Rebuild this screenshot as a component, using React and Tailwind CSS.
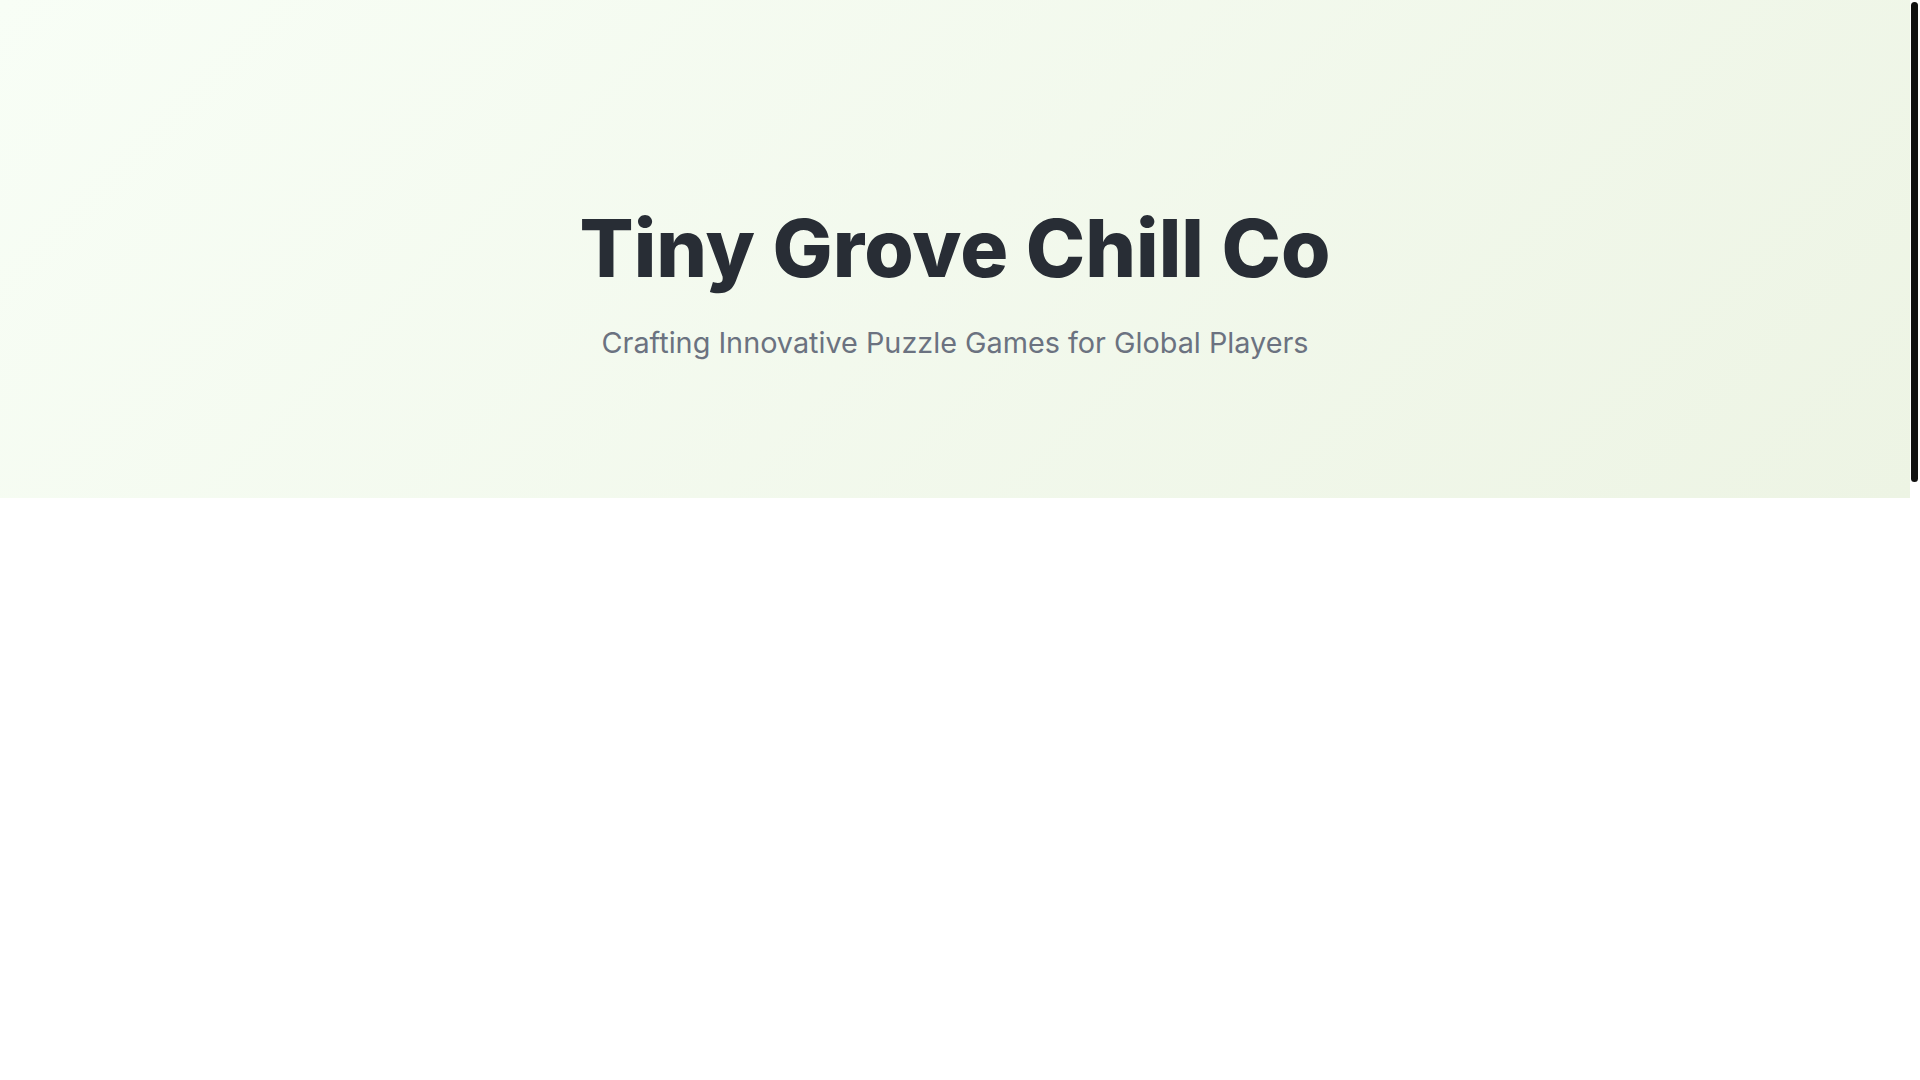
// Studio landing page: hero banner with company name and tagline.
export default function App() {
  return (
    <div className="flex h-screen overflow-hidden bg-white [font-family:Inter,'Noto_Sans',sans-serif]">
      <div className="flex-1 overflow-y-auto [scrollbar-width:none]">
        <header className="flex h-[498px] flex-col items-center bg-[linear-gradient(135deg,#f8fef6,#edf4e4)] pt-[204px] text-center">
          <h1 className="text-[80px] font-extrabold leading-[1.1] text-[#282d35]">Tiny Grove Chill Co</h1>
          <p className="mt-[29px] text-[1.8rem] leading-[1.5] text-[#6b7280]">
            Crafting Innovative Puzzle Games for Global Players
          </p>
        </header>
        <main className="h-[1920px]" />
      </div>
      {/* page scroll rail */}
      <div className="w-[10px] shrink-0 bg-white pl-[1px] pt-[2px]">
        <div className="h-[480px] w-[7px] rounded-full bg-[#111111]" />
      </div>
    </div>
  );
}
